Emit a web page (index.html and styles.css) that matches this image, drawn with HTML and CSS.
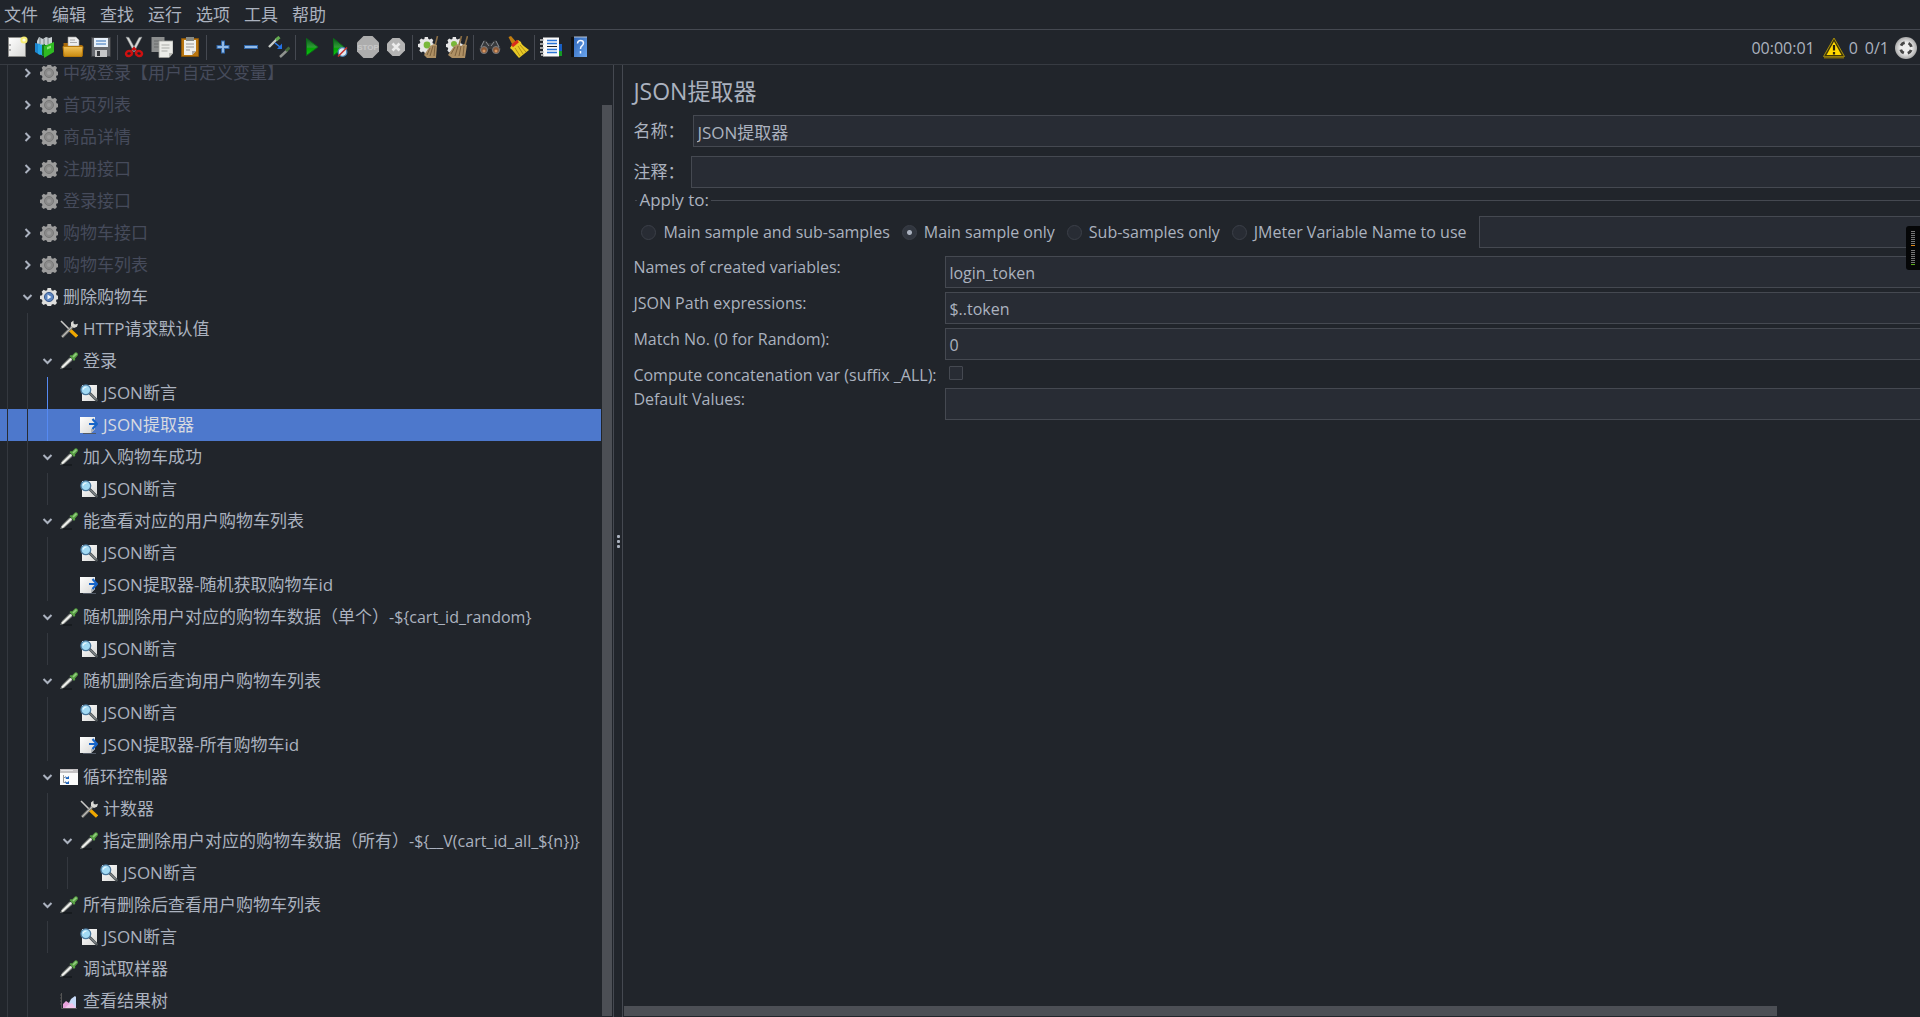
FILE: index.html
```html
<!DOCTYPE html>
<html lang="zh-CN">
<head>
<meta charset="utf-8">
<title>JMeter</title>
<link rel="stylesheet" href="styles.css">
</head>
<body>
<svg class="sprite" aria-hidden="true">
  <defs>
    <linearGradient id="play" x1="0" y1="0" x2="0" y2="1"><stop offset="0" stop-color="#0a5a1c"/><stop offset=".5" stop-color="#2e9a35"/><stop offset=".6" stop-color="#00a800"/><stop offset="1" stop-color="#12c41a"/></linearGradient>
    <linearGradient id="gold" x1="0" y1="0" x2="0" y2="1"><stop offset="0" stop-color="#f3c45a"/><stop offset="1" stop-color="#c98a10"/></linearGradient>
    <linearGradient id="blue" x1="0" y1="0" x2="1" y2="1"><stop offset="0" stop-color="#2f66b8"/><stop offset="1" stop-color="#6aa5ee"/></linearGradient>
    <linearGradient id="paper" x1="0" y1="0" x2="1" y2="1"><stop offset="0" stop-color="#ffffff"/><stop offset="1" stop-color="#d8d8d6"/></linearGradient>
    <radialGradient id="ball"><stop offset=".5" stop-color="#ededed"/><stop offset="1" stop-color="#a9a9a9"/></radialGradient>
    <path id="cog" d="M7.500 0h3.500l.5 2.200 1.500.6 2-1.100 2 2-1 2 .6 1.500 1.900.6v3.200l-1.900.6-.6 1.500 1 2-2 2-2-1-1.500.6-.5 2h-3.500l-.5-2-1.500-.6-2 1-2-2 1-2-.6-1.500L0 11V7.800l2-.6.6-1.500-1-2 2-2 2 1.100 1.500-.6z"/>
  </defs>
  <symbol id="chev-right" viewBox="0 0 14 14"><path d="M5.500 3l4 4-4 4" fill="none" stroke="#abb2bf" stroke-width="2"/></symbol>
  <symbol id="chev-down" viewBox="0 0 14 14"><path d="M3.500 5l4 4 4-4" fill="none" stroke="#abb2bf" stroke-width="2"/></symbol>
  <symbol id="gear-off" viewBox="0 0 18 18"><use href="#cog" fill="#9c9c9c"/><circle cx="9" cy="9" r="4.500" fill="#8a8a8a" stroke="#787878"/><circle cx="9" cy="9" r="2" fill="#9c9c9c"/></symbol>
  <symbol id="gear-on" viewBox="0 0 18 18"><use href="#cog" fill="#dededc"/><circle cx="9" cy="9" r="4.600" fill="#5a83bd" stroke="#39588c"/><path d="M7.500 6.500l4 2.500-4 2.500z" fill="#f0f4fa"/></symbol>
  <symbol id="tools" viewBox="0 0 18 18"><path d="M1 1l9 9" stroke="#c8c8c6" stroke-width="1.600"/><path d="M10 10l7 6.500" stroke="#f0a800" stroke-width="3.200"/><path d="M2 17L13 6" stroke="#8d8d8a" stroke-width="2.600"/><path d="M2 17L13 6" stroke="#bcbcb8" stroke-width="1"/><path d="M11 6V2.500L13.500.5v3L15 4.500l3-.8-1 3-3 1.300z" fill="#d9d9d5"/></symbol>
  <symbol id="pipette" viewBox="0 0 18 18"><path d="M3 17h9" stroke="#15181c" stroke-width="1.500"/><path d="M0 17l2-4L9.500 5.500l3 3L4 16z" fill="#848984"/><path d="M2 15.500l9.500-9" stroke="#f1f1ee" stroke-width="1.800"/><path d="M9.500 4L11 3l1 .5 3-3Q18-.5 18 3l-3 3.500.3 1L14 9z" fill="#579f43"/><path d="M13 5l3.500-3.300" stroke="#93cd7f" stroke-width="1.600"/></symbol>
  <symbol id="assert" viewBox="0 0 18 18"><path d="M2 1h15v16H2z" fill="url(#paper)"/><path d="M9 8.500l8.500 8.500" stroke="#444a4d" stroke-width="2.600"/><path d="M10 9.500l6 6" stroke="#aab0b2" stroke-width="1"/><circle cx="5.800" cy="5.800" r="4.900" fill="#a2daf4" stroke="#4b789d" stroke-width="1.300"/><path d="M3 5.500Q4 3 6.500 3" stroke="#eefaff" stroke-width="1.200" fill="none"/></symbol>
  <symbol id="extract" viewBox="0 0 18 18"><path d="M3 17.500h13" stroke="#525a66"/><path d="M0 1h15v12l-4 4H0z" fill="url(#paper)"/><path d="M11 17v-4h4z" fill="#aeb3b7"/><path d="M9 8h7M12.500 3l4.500 5-4.500 5" fill="none" stroke="#1764c8" stroke-width="2.200"/></symbol>
  <symbol id="loop" viewBox="0 0 18 18"><path d="M0 1h18v16H0z" fill="#fbfbfb"/><path d="M0 1h18v4H0z" fill="#c4c2c4"/><path d="M1 2.500h12" stroke="#e6e4e6"/><path d="M3.500 7v7.500H6M3.500 9.500H5" stroke="#999" fill="none"/><path d="M5 8l2 1.500L9 8v3H6zM5 13l2 1.500L9 13v3H6z" fill="#1d64bd"/></symbol>
  <symbol id="chart" viewBox="0 0 18 18"><path d="M1.500 1v15.500H17M0 3h1M0 6h1M0 9h1M0 12h1" stroke="#555" fill="none"/><path d="M3 16v-4l3-3 3 2 3-1 4 6z" fill="#e9a3dc"/><path d="M9 11l2-4 4-3 1 1v11l-5-3z" fill="#c7daf8"/><path d="M8 13l4-2 4 5H5z" fill="#f3c6ec"/></symbol>

  <symbol id="t-new" viewBox="0 0 22 22"><path d="M2.500 1.500h17v19h-17z" fill="url(#paper)" stroke="#8b8b89"/><path d="M4 8v2M4 13v2" stroke="#777"/><circle cx="18" cy="4" r="3.600" fill="#f6ec74"/><circle cx="18" cy="4" r="1.600" fill="#fffde0"/></symbol>
  <symbol id="t-templates" viewBox="0 0 22 22"><path d="M3 5L5 1l4 2 3-2 3 1 3-1v8H3z" fill="#c9cfd3"/><path d="M6 2v6M10 3v5M14 2v6" stroke="#7b8488"/><path d="M1 7l5 1v11l-5-3z" fill="#1d86d0"/><path d="M4 8l6 1v11l-6-2z" fill="#26a5e6"/><path d="M8 9l3-1v13l-3-2z" fill="#137a1b"/><path d="M10 10l10-4v10l-10 6z" fill="#2fbb22"/><path d="M13 11l4-1.500V12l-4 1.500z" fill="#8fe87d"/></symbol>
  <symbol id="t-open" viewBox="0 0 22 22"><path d="M1.500 20V7h5l2 2h12v11z" fill="#a8690a"/><path d="M6 10V1h8l3 3v6z" fill="#eee" stroke="#999" stroke-width=".6"/><path d="M8 4h5M8 6.500h7" stroke="#aaa"/><path d="M1 10.500h20l-1 10H2z" fill="url(#gold)" stroke="#b87a0c"/></symbol>
  <symbol id="t-save" viewBox="0 0 22 22"><path d="M1.500 1.500h19v19h-19z" fill="#66696f" stroke="#3b3d41"/><path d="M4 2h14v9H4z" fill="#e8f1fb"/><path d="M6 5h10M6 8h10" stroke="#6e9bd0" stroke-width="1.300"/><path d="M5 14h12v7H5z" fill="#c6c7c9"/><path d="M7 15h3v5H7z" fill="#35373b"/></symbol>
  <symbol id="t-cut" viewBox="0 0 22 22"><path d="M3 1l3 .5 7 13-2 1.500zM19 1l-3 .5-7 13 2 1.500z" fill="#d5d7d4" stroke="#85878a" stroke-width=".5"/><path d="M9 14l2-2 2 2" stroke="#cf1010" stroke-width="2" fill="none"/><ellipse cx="6" cy="17.500" rx="3" ry="2.400" fill="none" stroke="#cf1010" stroke-width="2.400" transform="rotate(-20 6 17.500)"/><ellipse cx="16" cy="17.500" rx="3" ry="2.400" fill="none" stroke="#cf1010" stroke-width="2.400" transform="rotate(20 16 17.500)"/></symbol>
  <symbol id="t-copy" viewBox="0 0 22 22"><path d="M.5 1h13v15H.5z" fill="#8c8e8e"/><path d="M3 5h8M3 8h5M3 11h5" stroke="#6b6d6d"/><path d="M8 5h14v12l-4 4.500H8z" fill="#ebece8" stroke="#9fa19c" stroke-width=".8"/><path d="M10.500 9h8M10.500 12h8M10.500 15h6" stroke="#a9aba7"/><path d="M18 21.500V17h4z" fill="#b9bab5"/></symbol>
  <symbol id="t-paste" viewBox="0 0 22 22"><path d="M2.500 2.500h17v18h-17z" fill="#b9750f" stroke="#84530a"/><path d="M5 4h12v11l-4 4H5z" fill="#efefec"/><path d="M7 8h8M7 11h8M7 14h4" stroke="#999"/><path d="M7 1h8v4H7z" fill="#868983"/><path d="M13 19v-4h4z" fill="#aaa"/></symbol>
  <symbol id="t-plus" viewBox="0 0 22 22"><path d="M11 4.500v13M4.500 11h13" stroke="#2f65a7" stroke-width="4"/><path d="M11 5.500v11M5.500 11h11" stroke="#93bbe8" stroke-width="2"/></symbol>
  <symbol id="t-minus" viewBox="0 0 22 22"><path d="M4 11h14" stroke="#2f65a7" stroke-width="4"/><path d="M5 11h12" stroke="#93bbe8" stroke-width="2"/></symbol>
  <symbol id="t-toggle" viewBox="0 0 22 22"><path d="M1 11l8-8" stroke="#c8ccc8" stroke-width="2.400"/><path d="M8 4l3.500-3" stroke="#62a94f" stroke-width="3"/><path d="M12 21l7-6.500" stroke="#90938f" stroke-width="2.400"/><path d="M18 15l3.500-3.500" stroke="#44683b" stroke-width="3"/><path d="M7 7l5 4" stroke="#2d7ef0" stroke-width="1.600"/><path d="M14 7.500V13H9z" fill="#2472e6"/></symbol>
  <symbol id="t-start" viewBox="0 0 22 22"><path d="M5.500 2.500L17 11 5.500 19.500z" fill="url(#play)" stroke="#0b6b18"/></symbol>
  <symbol id="t-nopause" viewBox="0 0 22 22"><path d="M4.500 2.500L15 11 4.500 19.500z" fill="url(#play)" stroke="#0b6b18"/><circle cx="13.500" cy="16" r="4.300" fill="#dfe9f2" stroke="#4f87b8" stroke-width="1.300"/><path d="M9 20.500l9-9" stroke="#c6322e" stroke-width="1.600"/></symbol>
  <symbol id="t-shutdown" viewBox="0 0 22 22"><path d="M7.500 2h7L20 7.500v7L14.500 20h-7L2 14.500v-7z" fill="#b4b4b4"/><path d="M7.500 7.500l7 7M14.500 7.500l-7 7" stroke="#ececec" stroke-width="2.600"/></symbol>
  <symbol id="t-clear" viewBox="0 0 22 22"><g transform="translate(0 1) scale(.9)"><use href="#cog" fill="#e6e6e6"/></g><circle cx="9" cy="9" r="3.400" fill="#79b83a"/><path d="M19.500 0l-2.500 10" stroke="#8b6e45" stroke-width="1.600"/><path d="M12 10l4-2 3 1-1 13H9l-3-3z" fill="#ae9064"/><path d="M12 12l-3 7M15 10l-3 10M17 10l-1 10" stroke="#705534" stroke-width=".8"/></symbol>
  <symbol id="t-clear-all" viewBox="0 0 22 22"><g transform="translate(0 1) scale(.9)"><use href="#cog" fill="#e6e6e6"/></g><circle cx="8" cy="8" r="3" fill="#79b83a"/><path d="M15.500 0l-2.500 9M21.500 0L19 9" stroke="#8b6e45" stroke-width="1.600"/><path d="M8 10l4-2 3 2 3-2 3 1-2 13H6l-4-3z" fill="#ae9064"/><path d="M9 11l-4 7M12 10L9 20M15 10l-2 10M18 10l-1 10" stroke="#705534" stroke-width=".8"/></symbol>
  <symbol id="t-search" viewBox="0 0 22 22"><path d="M5 4l3 1 1 2h4l1-2 3-1 5 9-3 5h-4l-3-5h-2l-3 5H3l-3-5z" fill="#383a3d"/><path d="M5 5L2 11M17 5l3 6M7 6l3 4M15 6l-3 4" stroke="#8f9398"/><circle cx="5" cy="14" r="3.500" fill="#8d5a37" stroke="#777b80" stroke-width="1"/><circle cx="17" cy="14" r="3.500" fill="#8d5a37" stroke="#777b80" stroke-width="1"/><circle cx="5" cy="15" r="1.500" fill="#d79864"/><circle cx="17" cy="15" r="1.500" fill="#d79864"/></symbol>
  <symbol id="t-broom" viewBox="0 0 22 22"><path d="M1.500 1L4 0l6 7-4 3z" fill="#c27e10"/><path d="M5 9l6-5 3 2c0 3 5 5 8 8L12 22C9 19 6 14 3 12z" fill="#e8c925"/><path d="M5 10l6-5" stroke="#d82c1b" stroke-width="3"/><path d="M8 12l5 8M11 10l5 8M13 9l6 7" stroke="#9f8010" stroke-width=".8"/></symbol>
  <symbol id="t-functions" viewBox="0 0 22 22"><path d="M17 8h5v7h-5z" fill="#185fc4"/><path d="M17 15h5v5h-5z" fill="#149a26"/><path d="M3 1.500h16v19H3z" fill="#fafafa"/><path d="M0 4h4M0 8h4M0 12h4M0 16h4M1 19h3" stroke="#c9c9c9" stroke-width="1.600"/><path d="M7 4.500h10M7 7.500h10M7 13.500h10M7 16.500h10" stroke="#2b76d8" stroke-width="1.300"/><path d="M7 10.500h10" stroke="#222"/></symbol>
  <symbol id="t-help" viewBox="0 0 22 22"><path d="M3 1h4v20H3z" fill="#111"/><path d="M6 1h13v20H6z" fill="url(#blue)"/><path d="M6 1h13" stroke="#b8c4d4"/><path d="M9.500 7.500q.3-3 3-3 3 0 3 2.600 0 1.600-1.600 2.800-1.400 1-1.400 3M12.500 15v2.500" fill="none" stroke="#f4f8ff" stroke-width="1.500"/></symbol>
  <symbol id="warning" viewBox="0 0 22 22"><path d="M11 1L21.500 19.500H.5z" fill="#3d3509" stroke="#a8900c"/><path d="M1 20.500h20" stroke="#7e6a0c" stroke-width="2"/><path d="M11 4.500L3.500 18h15z" fill="#ffd800"/><path d="M11 8v5.500M11 15v2.500" stroke="#2a240c" stroke-width="2.200"/></symbol>
  <symbol id="remote" viewBox="0 0 22 22"><circle cx="11" cy="11" r="11" fill="url(#ball)"/><circle cx="11" cy="11" r="5.500" fill="none" stroke="#454545" stroke-width="2.800" stroke-dasharray="4.600 4.040" stroke-dashoffset="-2"/></symbol>
</svg>

<div class="app">
  <nav class="menubar" aria-label="菜单">
    <button type="button">文件</button><button type="button">编辑</button><button type="button">查找</button><button type="button">运行</button><button type="button">选项</button><button type="button">工具</button><button type="button">帮助</button>
  </nav>

  <header class="toolbar">
    <div class="tools">
      <button type="button" aria-label="新建"><svg><use href="#t-new"/></svg></button>
      <button type="button" aria-label="模板"><svg><use href="#t-templates"/></svg></button>
      <button type="button" aria-label="打开"><svg><use href="#t-open"/></svg></button>
      <button type="button" aria-label="保存"><svg><use href="#t-save"/></svg></button>
      <span class="sep"></span>
      <button type="button" aria-label="剪切"><svg><use href="#t-cut"/></svg></button>
      <button type="button" aria-label="复制"><svg><use href="#t-copy"/></svg></button>
      <button type="button" aria-label="粘贴"><svg><use href="#t-paste"/></svg></button>
      <span class="sep"></span>
      <button type="button" aria-label="展开"><svg><use href="#t-plus"/></svg></button>
      <button type="button" aria-label="收起"><svg><use href="#t-minus"/></svg></button>
      <button type="button" aria-label="切换"><svg><use href="#t-toggle"/></svg></button>
      <span class="sep"></span>
      <button type="button" aria-label="启动"><svg><use href="#t-start"/></svg></button>
      <button type="button" aria-label="不停顿开始"><svg><use href="#t-nopause"/></svg></button>
      <button type="button" aria-label="停止"><svg viewBox="0 0 22 22"><path d="M6.500 0h9L22 6.500v9L15.500 22h-9L0 15.500v-9z" fill="#adadad"/><text x="11" y="14" class="stop-text">STOP</text></svg></button>
      <button type="button" aria-label="关闭"><svg><use href="#t-shutdown"/></svg></button>
      <span class="sep"></span>
      <button type="button" aria-label="清除"><svg><use href="#t-clear"/></svg></button>
      <button type="button" aria-label="清除全部"><svg><use href="#t-clear-all"/></svg></button>
      <span class="sep"></span>
      <button type="button" aria-label="查找"><svg><use href="#t-search"/></svg></button>
      <button type="button" aria-label="重置搜索"><svg><use href="#t-broom"/></svg></button>
      <span class="sep"></span>
      <button type="button" aria-label="函数助手"><svg><use href="#t-functions"/></svg></button>
      <button type="button" aria-label="帮助"><svg><use href="#t-help"/></svg></button>
    </div>
    <div class="status">
      <span class="elapsed">00:00:01</span>
      <svg><use href="#warning"/></svg>
      <span class="errors">0</span>
      <span class="threads">0/1</span>
      <svg><use href="#remote"/></svg>
    </div>
  </header>

  <main class="workspace">
    <section class="tree-pane">
      <ul class="tree">
        <li class="row d1 off"><button type="button" class="twist" aria-label="展开"><svg><use href="#chev-right"/></svg></button><svg class="icon"><use href="#gear-off"/></svg><span>中级登录【用户自定义变量】</span></li>
        <li class="row d1 off"><button type="button" class="twist" aria-label="展开"><svg><use href="#chev-right"/></svg></button><svg class="icon"><use href="#gear-off"/></svg><span>首页列表</span></li>
        <li class="row d1 off"><button type="button" class="twist" aria-label="展开"><svg><use href="#chev-right"/></svg></button><svg class="icon"><use href="#gear-off"/></svg><span>商品详情</span></li>
        <li class="row d1 off"><button type="button" class="twist" aria-label="展开"><svg><use href="#chev-right"/></svg></button><svg class="icon"><use href="#gear-off"/></svg><span>注册接口</span></li>
        <li class="row d1 off"><span class="twist"></span><svg class="icon"><use href="#gear-off"/></svg><span>登录接口</span></li>
        <li class="row d1 off"><button type="button" class="twist" aria-label="展开"><svg><use href="#chev-right"/></svg></button><svg class="icon"><use href="#gear-off"/></svg><span>购物车接口</span></li>
        <li class="row d1 off"><button type="button" class="twist" aria-label="展开"><svg><use href="#chev-right"/></svg></button><svg class="icon"><use href="#gear-off"/></svg><span>购物车列表</span></li>
        <li class="row d1"><button type="button" class="twist" aria-label="收起"><svg><use href="#chev-down"/></svg></button><svg class="icon"><use href="#gear-on"/></svg><span>删除购物车</span></li>
        <li class="row d2"><span class="twist"></span><svg class="icon"><use href="#tools"/></svg><span>HTTP请求默认值</span></li>
        <li class="row d2"><button type="button" class="twist" aria-label="收起"><svg><use href="#chev-down"/></svg></button><svg class="icon"><use href="#pipette"/></svg><span>登录</span></li>
        <li class="row d3 active-guide"><span class="twist"></span><svg class="icon"><use href="#assert"/></svg><span>JSON断言</span></li>
        <li class="row d3 active-guide selected"><span class="twist"></span><svg class="icon"><use href="#extract"/></svg><span>JSON提取器</span></li>
        <li class="row d2"><button type="button" class="twist" aria-label="收起"><svg><use href="#chev-down"/></svg></button><svg class="icon"><use href="#pipette"/></svg><span>加入购物车成功</span></li>
        <li class="row d3"><span class="twist"></span><svg class="icon"><use href="#assert"/></svg><span>JSON断言</span></li>
        <li class="row d2"><button type="button" class="twist" aria-label="收起"><svg><use href="#chev-down"/></svg></button><svg class="icon"><use href="#pipette"/></svg><span>能查看对应的用户购物车列表</span></li>
        <li class="row d3"><span class="twist"></span><svg class="icon"><use href="#assert"/></svg><span>JSON断言</span></li>
        <li class="row d3"><span class="twist"></span><svg class="icon"><use href="#extract"/></svg><span>JSON提取器-随机获取购物车id</span></li>
        <li class="row d2"><button type="button" class="twist" aria-label="收起"><svg><use href="#chev-down"/></svg></button><svg class="icon"><use href="#pipette"/></svg><span>随机删除用户对应的购物车数据（单个）<span class="expr">-${cart_id_random}</span></span></li>
        <li class="row d3"><span class="twist"></span><svg class="icon"><use href="#assert"/></svg><span>JSON断言</span></li>
        <li class="row d2"><button type="button" class="twist" aria-label="收起"><svg><use href="#chev-down"/></svg></button><svg class="icon"><use href="#pipette"/></svg><span>随机删除后查询用户购物车列表</span></li>
        <li class="row d3"><span class="twist"></span><svg class="icon"><use href="#assert"/></svg><span>JSON断言</span></li>
        <li class="row d3"><span class="twist"></span><svg class="icon"><use href="#extract"/></svg><span>JSON提取器-所有购物车id</span></li>
        <li class="row d2"><button type="button" class="twist" aria-label="收起"><svg><use href="#chev-down"/></svg></button><svg class="icon"><use href="#loop"/></svg><span>循环控制器</span></li>
        <li class="row d3"><span class="twist"></span><svg class="icon"><use href="#tools"/></svg><span>计数器</span></li>
        <li class="row d3"><button type="button" class="twist" aria-label="收起"><svg><use href="#chev-down"/></svg></button><svg class="icon"><use href="#pipette"/></svg><span>指定删除用户对应的购物车数据（所有）<span class="expr">-${__V(cart_id_all_${n})}</span></span></li>
        <li class="row d4"><span class="twist"></span><svg class="icon"><use href="#assert"/></svg><span>JSON断言</span></li>
        <li class="row d2"><button type="button" class="twist" aria-label="收起"><svg><use href="#chev-down"/></svg></button><svg class="icon"><use href="#pipette"/></svg><span>所有删除后查看用户购物车列表</span></li>
        <li class="row d3"><span class="twist"></span><svg class="icon"><use href="#assert"/></svg><span>JSON断言</span></li>
        <li class="row d2"><span class="twist"></span><svg class="icon"><use href="#pipette"/></svg><span>调试取样器</span></li>
        <li class="row d2"><span class="twist"></span><svg class="icon"><use href="#chart"/></svg><span>查看结果树</span></li>
      </ul>
      <div class="v-scroll"><div class="v-thumb"></div></div>
    </section>

    <div class="divider"><i></i><i></i><i></i></div>

    <section class="editor">
      <form class="form">
        <h1>JSON提取器</h1>
        <div class="field name"><label for="name">名称：</label><input id="name" type="text" value="JSON提取器"></div>
        <div class="field comment"><label for="comment">注释：</label><input id="comment" type="text"></div>
        <fieldset>
          <legend>Apply to:</legend>
          <div class="scopes">
            <label><input type="radio" name="scope">Main sample and sub-samples</label>
            <label><input type="radio" name="scope" checked>Main sample only</label>
            <label><input type="radio" name="scope">Sub-samples only</label>
            <label><input type="radio" name="scope">JMeter Variable Name to use</label>
            <input type="text" aria-label="JMeter Variable Name">
          </div>
        </fieldset>
        <div class="params">
          <label for="vars">Names of created variables:</label><input id="vars" type="text" value="login_token">
          <label for="paths">JSON Path expressions:</label><input id="paths" type="text" value="$..token">
          <label for="match">Match No. (0 for Random):</label><input id="match" type="text" value="0">
          <label for="concat" class="short">Compute concatenation var (suffix _ALL):</label><input id="concat" type="checkbox">
          <label for="defaults">Default Values:</label><input id="defaults" type="text">
        </div>
      </form>
      <div class="h-scroll"><div class="h-thumb"></div></div>
    </section>
  </main>

  <aside class="meter"><span class="bars orange"></span><span class="bars green"></span></aside>
</div>
</body>
</html>
```
FILE: styles.css
```css
:root {
  --bg: #21252b;
  --field: #282c34;
  --line: #454951;
  --guide: #34383f;
  --text: #abb2bf;
  --thumb: #4c4f55;
  --select: #4d78cc;
}

* { box-sizing: border-box; }

body {
  margin: 0;
  background: var(--bg);
  color: var(--text);
  font-family: "Open Sans", "Noto Sans CJK SC", sans-serif;
  font-size: 17px;
  line-height: 24px;
}

.sprite { position: absolute; width: 0; height: 0; }
.stop-text { font: 700 8px "Liberation Sans", sans-serif; fill: #c8c8c8; text-anchor: middle; }

button {
  padding: 0;
  border: 0;
  background: none;
  color: inherit;
  font: inherit;
}

.app { display: flex; flex-direction: column; height: 100vh; overflow: hidden; }

.menubar {
  display: flex;
  flex: none;
  gap: 14px;
  height: 30px;
  padding: 0 4px;
  border-bottom: 1px solid var(--line);
}

.toolbar {
  display: flex;
  flex: none;
  justify-content: space-between;
  align-items: center;
  height: 35px;
  padding: 0 3px;
  border-bottom: 1px solid #373b42;
}
.tools { display: flex; align-items: center; }
.tools button { display: flex; justify-content: center; width: 28px; }
.toolbar svg { width: 22px; height: 22px; flex: none; }
.sep { width: 1px; height: 25px; margin: 0 2px; background: var(--line); }
.status { display: flex; align-items: center; padding-top: 1px; font-size: 16px; }
.elapsed { margin-right: 8px; }
.errors { margin: 0 7px 0 4px; }
.threads { margin-right: 6px; }

.workspace { display: flex; flex: 1; min-height: 0; }

.tree-pane {
  display: flex;
  flex: none;
  width: 32%;
  min-width: 400px;
  overflow: hidden;
  border-right: 1px solid var(--line);
}
.tree {
  flex: 1;
  min-width: 0;
  margin: -8px 0 0;
  padding: 0;
  list-style: none;
}
.row { display: flex; align-items: center; height: 32px; white-space: nowrap; }
.row::before {
  content: "";
  align-self: stretch;
  width: calc(var(--depth) * 20px);
  background: repeating-linear-gradient(to right, transparent 0 7px, var(--guide) 7px 8px, transparent 8px 20px);
}
.d1 { --depth: 1; }
.d2 { --depth: 2; }
.d3 { --depth: 3; }
.d4 { --depth: 4; }
.active-guide::before {
  background:
    linear-gradient(#568af2, #568af2) 47px 0 / 1px 100% no-repeat,
    repeating-linear-gradient(to right, transparent 0 7px, var(--guide) 7px 8px, transparent 8px 20px);
}
.off { color: #464b5b; }
.selected { --guide: #282c34; background: var(--select); color: #d7dae0; }
.expr { font-size: 16px; }
.twist { display: flex; flex: none; width: 14px; height: 14px; margin-right: 6px; }
.twist svg { width: 14px; height: 14px; }
.icon { flex: none; width: 18px; height: 18px; margin-right: 5px; }

.v-scroll { width: 12px; padding: 40px 1px 1px; }
.v-thumb { height: 100%; background: var(--thumb); }

.divider {
  display: flex;
  flex: none;
  flex-direction: column;
  justify-content: center;
  align-items: center;
  gap: 2px;
  width: 9px;
  border-right: 1px solid var(--line);
}
.divider i { width: 3px; height: 3px; border-radius: 1px; background: var(--text); }

.editor {
  display: flex;
  flex: 1;
  flex-direction: column;
  justify-content: space-between;
  min-width: 0;
  overflow: hidden;
}
.form { width: 112%; padding: 10px 0 0 10px; }
h1 { margin: 0; font-size: 23px; line-height: 32px; font-weight: 400; }

input[type="text"] {
  height: 32px;
  min-width: 0;
  padding: 2px 3px 0;
  border: 1px solid var(--line);
  border-radius: 0;
  background: var(--field);
  color: inherit;
  font: inherit;
}
.field { display: flex; align-items: center; margin-bottom: 9px; }
.field input[type="text"] { flex: 1; padding: 0 3px; }
.name { margin-top: 8px; }
.name label { width: 60px; }
.comment { margin-bottom: 0; }
.comment label { width: 58px; }

fieldset { min-width: 0; margin: 0 0 8px 2px; padding: 4px 0 0 6px; border: 0 solid var(--line); border-top-width: 1px; }
legend { margin-left: -4px; padding: 0 2px; }
.scopes { display: flex; align-items: center; gap: 12px; font-size: 16px; }
.scopes label { display: flex; align-items: center; gap: 7px; white-space: nowrap; }
.scopes input[type="text"] { flex: 1; }

input[type="radio"] {
  appearance: none;
  width: 15px;
  height: 15px;
  margin: 0;
  border: 1px solid #3b3f48;
  border-radius: 50%;
  background: var(--field);
}
input[type="radio"]:checked { background: radial-gradient(circle, var(--text) 0 2px, #31363f 3px); }
input[type="checkbox"] {
  appearance: none;
  width: 14px;
  height: 14px;
  margin: 2px 0 0 4px;
  border: 1px solid var(--line);
  border-radius: 1px;
  background: var(--field);
}

.params {
  display: grid;
  grid-template-columns: 312px 1fr;
  row-gap: 4px;
  font-size: 16px;
  white-space: nowrap;
}
.params label { line-height: 22px; }
.params .short { height: 20px; }

.h-scroll { padding: 0 0 1px 1px; }
.h-thumb { width: 89%; height: 10px; background: var(--thumb); }

.meter {
  position: fixed;
  top: 226px;
  right: 0;
  display: flex;
  flex-direction: column;
  align-items: center;
  gap: 4px;
  width: 14px;
  height: 44px;
  padding-top: 5px;
  border-radius: 3px 0 0 3px;
  background: #050607;
}
.bars {
  width: 4px;
  height: 15px;
  background: repeating-linear-gradient(#777 0 1px, transparent 1px 2px);
  border-bottom: 1px solid;
}
.orange { color: #e08a1c; }
.green { color: #5fae1e; }
```
